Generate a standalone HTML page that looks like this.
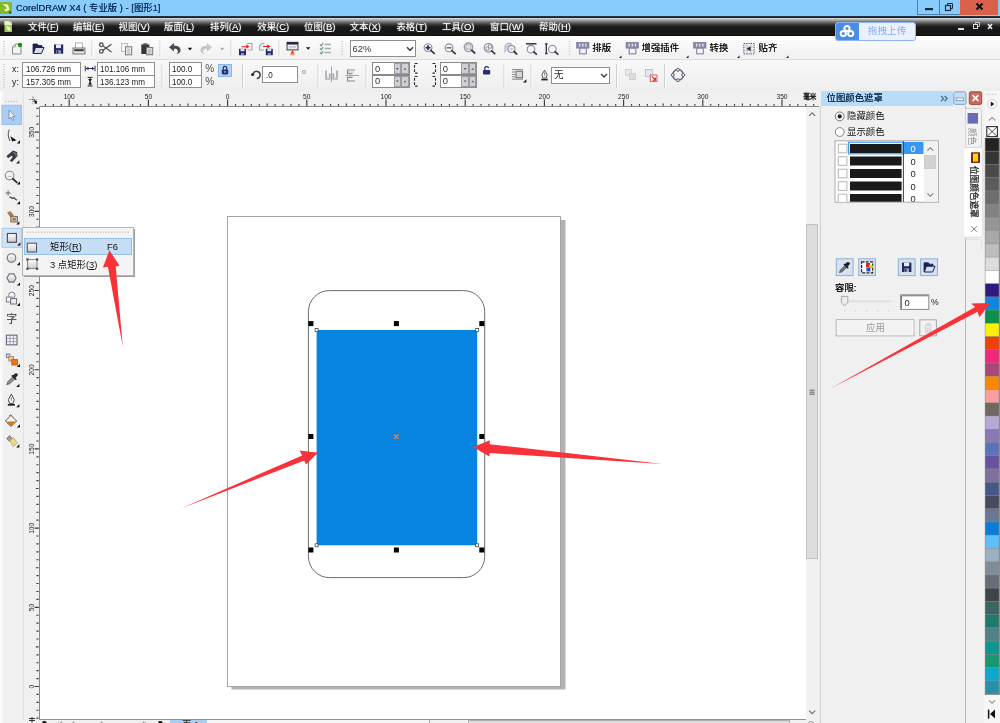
<!DOCTYPE html><html><head><meta charset="utf-8"><title>CorelDRAW X4</title><style>
*{box-sizing:border-box;margin:0;padding:0}
html,body{width:1000px;height:723px;overflow:hidden;background:#f0f0f0}
body{font-family:"Liberation Sans","Noto Sans CJK SC",sans-serif;font-size:9.4px;color:#000;position:relative}
.abs{position:absolute}
#root{position:absolute;left:0;top:0;width:1000px;height:723px;overflow:hidden;filter:blur(0.45px)}
.tx{white-space:nowrap;line-height:12px}
#title{left:0;top:0;width:1000px;height:16px;background:#88ccfe}
#menubar{left:0;top:16px;width:1000px;height:20.4px;background:linear-gradient(#2a3a4a 0,#1a222c 1.5px,#dcdcdc 2.2px,#a6a6a6 4px,#727272 6px,#424242 8px,#222 10px,#181818 12px,#181716 18.5px,#0a0a0a 20.4px)}
.mi{top:5px;font-size:9.4px;line-height:12px;color:#fff;white-space:nowrap;text-shadow:0 0 1.5px #aaa}
#tb1{left:0;top:36.4px;width:1000px;height:22.6px;background:linear-gradient(#fdfdfd,#f0f0f0)}
#tb2{left:0;top:59px;width:1000px;height:32px;background:linear-gradient(#f8f8f8,#eeeeee);border-top:1px solid #dedede}
.inp{background:#fff;border:1px solid #8e8e8e}
.num{font-size:9.2px;color:#222;transform-origin:0 50%;transform:scaleX(0.88);display:inline-block}
#canvas{left:39px;top:106px;width:767px;height:613px;background:#fff;border-left:1px solid #666;border-top:1px solid #888}
.sep{width:1px;background:#d0d0d0;border-right:1px solid #fafafa;box-sizing:content-box}
</style></head><body><div id="root">
<div id="title" class="abs">
<svg class="abs" style="left:0px;top:1px;" width="13" height="14" viewBox="0 0 13 14"><rect x="0" y="1" width="12" height="12" fill="#86b72a"/><path d="M2.5 3 L8 3.5 L9.5 8.5 L6 10.5 L4 8.5 L7 7.5 L5.5 5.5 Z" fill="#eef7cf"/><rect x="9" y="10.5" width="2" height="2" fill="#2a5a10"/></svg>
<div class="abs tx " style="left:16px;top:2px;font-size:9.4px;color:#0f3560;text-shadow:0 0 0.5px #0f3560">CorelDRAW X4 ( 专业版 ) - [图形1]</div>
<div class="abs" style="left:917px;top:0px;width:22px;height:15px;border-left:1px solid #4a7fae;border-bottom:1px solid #4a7fae"></div>
<div class="abs" style="left:939px;top:0px;width:21px;height:15px;border-left:1px solid #4a7fae;border-bottom:1px solid #4a7fae"></div>
<div class="abs" style="left:960px;top:0px;width:38px;height:15px;background:#d9604a"></div>
<svg class="abs" style="left:917px;top:0px;" width="83" height="16" viewBox="0 0 83 16"><rect x="8" y="8" width="8" height="2.2" fill="#16283a"/><rect x="28.5" y="5.5" width="5" height="5" fill="none" stroke="#16283a" stroke-width="1.2"/><path d="M30.5 5 V3.5 H35.5 V8.5 H34" fill="none" stroke="#16283a" stroke-width="1"/><path d="M59.5 3.5 L65.5 9.5 M65.5 3.5 L59.5 9.5" stroke="#111" stroke-width="2"/></svg>
</div>
<div id="menubar" class="abs">
<svg class="abs" style="left:3.7px;top:4px;" width="9" height="13" viewBox="0 0 9 13"><rect x="0.5" y="1" width="7.5" height="11" fill="#9ccb4c"/><path d="M0.5 1 h4 l3.5 3 v1 h-7.5z" fill="#e6f5c9"/><path d="M2 6 l4 1 l1 3 l-3 1 z" fill="#eaf6d0"/></svg>
<div class="abs mi" style="left:28px">文件(<u>F</u>)</div>
<div class="abs mi" style="left:73px">编辑(<u>E</u>)</div>
<div class="abs mi" style="left:118.5px">视图(<u>V</u>)</div>
<div class="abs mi" style="left:164px">版面(<u>L</u>)</div>
<div class="abs mi" style="left:210px">排列(<u>A</u>)</div>
<div class="abs mi" style="left:257.3px">效果(<u>C</u>)</div>
<div class="abs mi" style="left:304px">位图(<u>B</u>)</div>
<div class="abs mi" style="left:349.7px">文本(<u>X</u>)</div>
<div class="abs mi" style="left:396.4px">表格(<u>T</u>)</div>
<div class="abs mi" style="left:442px">工具(<u>O</u>)</div>
<div class="abs mi" style="left:490px">窗口(<u>W</u>)</div>
<div class="abs mi" style="left:539px">帮助(<u>H</u>)</div>
<svg class="abs" style="left:955px;top:4px;" width="40" height="14" viewBox="0 0 40 14"><rect x="3" y="8" width="6" height="2" fill="#ddd"/><rect x="18.5" y="4.5" width="4" height="4" fill="none" stroke="#ddd"/><path d="M20.5 4 V2.5 H24.5 V6.5 H23" fill="none" stroke="#ddd" stroke-width="0.8"/><path d="M33 4 L37 9 M37 4 L33 9" stroke="#eee" stroke-width="1.5"/></svg>
</div>
<div id="tb1" class="abs"></div>
<div id="tb2" class="abs"></div>
<div class="abs" style="left:835px;top:22px;width:81px;height:19px;border-radius:3px;background:#eaf1fd;border:1px solid #8db3f0;overflow:hidden"><div class="abs" style="left:-1px;top:-1px;width:24px;height:19px;background:#4a8de8"></div><svg class="abs" style="left:3px;top:1px" width="16" height="14" viewBox="0 0 16 14"><g fill="none" stroke="#fff" stroke-width="2"><circle cx="8" cy="4.5" r="2.6"/><circle cx="4.3" cy="9.5" r="2.6"/><circle cx="11.7" cy="9.5" r="2.6"/></g></svg><div class="abs tx" style="left:32px;top:2px;font-size:9.4px;color:#86acee;letter-spacing:0.3px">拖拽上传</div></div>
<svg class="abs" style="left:0;top:0" width="1000" height="95" viewBox="0 0 1000 95"><line x1="4" y1="41" x2="4" y2="56" stroke="#c4c4c4" stroke-width="1.5" stroke-dasharray="1 1.5"/><path d="M12.5 47 L15.5 44 H21 V54 H12.5Z" fill="#f4f4f4" stroke="#8a8a8a" stroke-width="1"/><path d="M12.5 47 H15.5 V44" fill="none" stroke="#9a9a9a" stroke-width="0.8"/><circle cx="20" cy="45" r="2.2" fill="#1f8a1f"/><path d="M33 53.5 V44 H37.5 L38.5 45.5 H42 V47" fill="#1c2250" stroke="#1c2250" stroke-width="0.8"/><path d="M33.3 53.5 L35.5 47.5 H44 L41.5 53.5Z" fill="#d9dcec" stroke="#1c2250" stroke-width="1"/><rect x="54" y="44.5" width="9.2" height="9.2" fill="#22285e"/><rect x="56" y="44.5" width="5" height="3.6" fill="#e8e8f4"/><rect x="56.3" y="50.3" width="4.6" height="3.4" fill="#9fa4c8"/><rect x="57" y="50.8" width="1.4" height="2.6" fill="#22285e"/><rect x="75.5" y="43" width="7" height="5.5" fill="#fff" stroke="#a0a0a0" stroke-width="0.8"/><rect x="73" y="48" width="12" height="6" fill="#e6e6e6" stroke="#6a6a6a" stroke-width="0.9"/><rect x="74.2" y="49.2" width="9.6" height="2" fill="#3c3c3c"/><line x1="92" y1="40" x2="92" y2="56" stroke="#cfcfcf" stroke-width="1"/><line x1="93" y1="40" x2="93" y2="56" stroke="#fbfbfb" stroke-width="1"/><g fill="none" stroke="#555" stroke-width="1.3"><circle cx="101.3" cy="44.8" r="1.8"/><circle cx="101.3" cy="51.4" r="1.8"/><path d="M102.8 45.8 L111.5 52 M102.8 50.4 L111.5 44.2"/></g><rect x="121.5" y="43.5" width="6" height="8" fill="#f7f7f7" stroke="#b8b8b8" stroke-width="0.9"/><rect x="125.5" y="46.8" width="6.2" height="8" fill="#f0f0f0" stroke="#777" stroke-width="1"/><path d="M127 49.2h3.2M127 51h3.2M127 52.8h3.2" stroke="#9a9a9a" stroke-width="0.7"/><rect x="141.3" y="44.5" width="8" height="9.5" fill="#3a3634"/><rect x="143.3" y="43.3" width="4" height="2" fill="#555"/><rect x="146.5" y="47.5" width="6.2" height="7.3" fill="#dcdcdc" stroke="#777" stroke-width="1"/><path d="M148 50h3.2M148 51.8h3.2M148 53.4h3.2" stroke="#999" stroke-width="0.7"/><line x1="160" y1="40" x2="160" y2="56" stroke="#cfcfcf" stroke-width="1"/><line x1="161" y1="40" x2="161" y2="56" stroke="#fbfbfb" stroke-width="1"/><path d="M169 47.2 L174 43 V45.8 C179 45.6 180.8 48 180.5 50.5 C180.3 52.6 178.6 54 176.3 54.2 C178 53 178.2 51.4 177.6 50.3 C176.9 49 175.5 48.7 174 48.8 V51.6 Z" fill="#454a54"/><path d="M187.8 47.8 h4.4 l-2.2 2.6z" fill="#111"/><path d="M212 47.2 L207 43 V45.8 C202 45.6 200.2 48 200.5 50.5 C200.7 52.6 202.4 54 204.7 54.2 C203 53 202.8 51.4 203.4 50.3 C204.1 49 205.5 48.7 207 48.8 V51.6 Z" fill="#c6c6c6"/><path d="M220 47.8 h4.4 l-2.2 2.6z" fill="#ababab"/><line x1="231" y1="40" x2="231" y2="56" stroke="#cfcfcf" stroke-width="1"/><line x1="232" y1="40" x2="232" y2="56" stroke="#fbfbfb" stroke-width="1"/><path d="M247 43.5 H252 V50 H247.5" fill="none" stroke="#9aa" stroke-width="1.1"/><rect x="239" y="48.8" width="7" height="6.4" fill="#23285c"/><rect x="240.5" y="49" width="4" height="2.2" fill="#dfe2f2"/><rect x="241" y="53" width="3" height="2.2" fill="#8c91b8"/><path d="M241.5 46.2 H246.3 V44.4 L249.6 46.6 L246.3 48.8 V47.2 H241.5Z" fill="#e41f25"/><path d="M264.5 43.5 H262 L259.5 46 V50 H264" fill="#eef2f4" stroke="#9aa" stroke-width="1.1"/><rect x="265.8" y="48.8" width="7" height="6.4" fill="#23285c"/><rect x="267.3" y="49" width="4" height="2.2" fill="#dfe2f2"/><rect x="267.8" y="53" width="3" height="2.2" fill="#8c91b8"/><path d="M263 46 H267.3 V44.2 L270.6 46.4 L267.3 48.6 V47 H263Z" fill="#e41f25"/><line x1="279" y1="40" x2="279" y2="56" stroke="#cfcfcf" stroke-width="1"/><line x1="280" y1="40" x2="280" y2="56" stroke="#fbfbfb" stroke-width="1"/><rect x="287" y="42.3" width="11" height="7.6" fill="#eceef6" stroke="#2a2a3a" stroke-width="0.9"/><rect x="287" y="42.3" width="11" height="2.2" fill="#22222e"/><path d="M289 47 h7" stroke="#9a9ab0" stroke-width="0.8"/><path d="M290.3 54.8 L292.5 49.2 L294.7 54.8 Z" fill="#f03a1a"/><circle cx="292.5" cy="54.3" r="1.4" fill="#f9a03a"/><path d="M306 47.2 h4.4 l-2.2 2.6z" fill="#111"/><g stroke="#a2b0a6" stroke-width="1.5"><path d="M324.5 44.5h6.5M324.5 48.5h6.5M324.5 52.5h6.5"/></g><g stroke="#7f9c86" stroke-width="1.3" fill="none"><path d="M320 44.5l1.2 1.2 2-2.6M320 48.5l1.2 1.2 2-2.6M320 52.5l1.2 1.2 2-2.6"/></g><line x1="342" y1="41" x2="342" y2="56" stroke="#c4c4c4" stroke-width="1.5" stroke-dasharray="1 1.5"/><circle cx="428" cy="47.6" r="3.9" fill="#f4f4fa" stroke="#8a8a98" stroke-width="1.1"/><line x1="430.808" y1="50.408" x2="434.2" y2="53.4" stroke="#3a3a44" stroke-width="1.8" stroke-linecap="round"/><path d="M425.6 47.6h4.8M428 45.2v4.8" stroke="#2a2a55" stroke-width="1.6"/><circle cx="449" cy="47.8" r="3.9" fill="#f4f4fa" stroke="#8a8a98" stroke-width="1.1"/><line x1="451.808" y1="50.608" x2="455.2" y2="53.6" stroke="#3a3a44" stroke-width="1.8" stroke-linecap="round"/><path d="M446.6 47.8h4.8" stroke="#777" stroke-width="1.6"/><circle cx="468.5" cy="47.2" r="4.3" fill="#f4f4fa" stroke="#8a8a98" stroke-width="1.1"/><line x1="471.596" y1="50.296" x2="474.7" y2="53" stroke="#3a3a44" stroke-width="1.8" stroke-linecap="round"/><rect x="466" y="44.8" width="5" height="4.4" fill="#e4e4ee" stroke="#9a9aa8" stroke-width="0.8"/><circle cx="488.5" cy="47.8" r="4.3" fill="#f4f4fa" stroke="#8a8a98" stroke-width="1.1"/><line x1="491.596" y1="50.896" x2="494.7" y2="53.6" stroke="#3a3a44" stroke-width="1.8" stroke-linecap="round"/><rect x="486" y="47" width="3" height="3" fill="#fff" stroke="#888" stroke-width="0.8"/><rect x="488.5" y="45" width="3" height="3" fill="#fff" stroke="#888" stroke-width="0.8"/><path d="M505 52.5 V45.5 L507.5 43.3 H511 V46" fill="#d6d6e6" stroke="#a0a0b4" stroke-width="0.9"/><circle cx="511.5" cy="49" r="3.5" fill="#f4f4fa" stroke="#8a8a98" stroke-width="1.1"/><line x1="514.02" y1="51.52" x2="516.6" y2="54" stroke="#3a3a44" stroke-width="1.8" stroke-linecap="round"/><circle cx="511.5" cy="49" r="1.5" fill="#c8c8dc"/><path d="M526 43.8 h10.5" stroke="#33333e" stroke-width="1.5"/><circle cx="531" cy="49.2" r="3.8" fill="#f4f4fa" stroke="#8a8a98" stroke-width="1.1"/><line x1="533.736" y1="51.936" x2="536.3" y2="54.2" stroke="#3a3a44" stroke-width="1.8" stroke-linecap="round"/><path d="M546.3 44 v9.5M545 44h2.6M545 53.5h2.6" stroke="#33333e" stroke-width="1.3"/><circle cx="552.3" cy="49" r="3.8" fill="#f4f4fa" stroke="#8a8a98" stroke-width="1.1"/><line x1="555.036" y1="51.736" x2="557.8" y2="54.2" stroke="#3a3a44" stroke-width="1.8" stroke-linecap="round"/><line x1="569.5" y1="41" x2="569.5" y2="56" stroke="#c4c4c4" stroke-width="1.5" stroke-dasharray="1 1.5"/><rect x="576.5" y="42.3" width="12.5" height="5.8" fill="#8a8aa8" stroke="#77779a" stroke-width="0.6"/><path d="M579.7 43.8 v2.8M582.8 43.8 v2.8M585.9 43.8 v2.8" stroke="#f0f0f8" stroke-width="1.2"/><rect x="579.7" y="48.2" width="6.6" height="5.6" fill="#f4f4fa" stroke="#8a8aa8" stroke-width="1.2"/><path d="M621.5 58 v-2.4 l-2.4 2.4z" fill="#111"/><rect x="626" y="42.3" width="12.5" height="5.8" fill="#8a8aa8" stroke="#77779a" stroke-width="0.6"/><path d="M629.2 43.8 v2.8M632.3 43.8 v2.8M635.4 43.8 v2.8" stroke="#f0f0f8" stroke-width="1.2"/><rect x="629.2" y="48.2" width="6.6" height="5.6" fill="#f4f4fa" stroke="#8a8aa8" stroke-width="1.2"/><path d="M688.5 58 v-2.4 l-2.4 2.4z" fill="#111"/><rect x="693.5" y="42.3" width="12.5" height="5.8" fill="#8a8aa8" stroke="#77779a" stroke-width="0.6"/><path d="M696.7 43.8 v2.8M699.8 43.8 v2.8M702.9 43.8 v2.8" stroke="#f0f0f8" stroke-width="1.2"/><rect x="696.7" y="48.2" width="6.6" height="5.6" fill="#f4f4fa" stroke="#8a8aa8" stroke-width="1.2"/><path d="M739.5 58 v-2.4 l-2.4 2.4z" fill="#111"/><rect x="743.8" y="43.5" width="10.4" height="10.4" fill="#f2f2f6" stroke="#55555f" stroke-width="1" stroke-dasharray="1.3 1"/><path d="M747.2 43.5v10.4M750.8 43.5v10.4M743.8 47h10.4M743.8 50.5h10.4" stroke="#a8a8b4" stroke-width="0.6"/><path d="M746.3 48.7 L750.6 46.4 V51Z" fill="#2a2a34"/><path d="M788.5 58 v-2.4 l-2.4 2.4z" fill="#111"/></svg>
<div class="abs tx " style="left:592.3px;top:42px;font-size:9.4px;color:#111;text-shadow:0 0 0.5px #222">排版</div>
<div class="abs tx " style="left:641.5px;top:42px;font-size:9.4px;color:#111;text-shadow:0 0 0.5px #222">增强插件</div>
<div class="abs tx " style="left:709.5px;top:42px;font-size:9.4px;color:#111;text-shadow:0 0 0.5px #222">转换</div>
<div class="abs tx " style="left:758.5px;top:42px;font-size:9.4px;color:#111;text-shadow:0 0 0.5px #222">贴齐</div>
<div class="abs" style="left:349.5px;top:40.3px;width:66.8px;height:16.3px;background:#fff;border:1px solid #8e8e8e"></div>
<div class="abs tx " style="left:352.5px;top:42.5px;font-size:9.4px;color:#333">62%</div>
<svg class="abs" style="left:405px;top:44px;" width="10" height="10" viewBox="0 0 10 10"><path d="M2 3.2 L5 6.3 L8 3.2" fill="none" stroke="#444" stroke-width="1.5"/></svg>
<div class="abs tx " style="left:12px;top:63.3px;font-size:8.8px;color:#222">x:</div>
<div class="abs tx " style="left:12px;top:75.6px;font-size:8.8px;color:#222">y:</div>
<div class="abs inp" style="left:22px;top:62px;width:58.5px;height:13.6px"><span class="abs tx num" style="left:2.6px;top:-0.2px">106.726 mm</span></div>
<div class="abs inp" style="left:22px;top:74.6px;width:58.5px;height:13.4px"><span class="abs tx num" style="left:2.6px;top:0.6px">157.305 mm</span></div>
<div class="abs inp" style="left:96.5px;top:62px;width:58.5px;height:13.6px"><span class="abs tx num" style="left:2.6px;top:-0.2px">101.106 mm</span></div>
<div class="abs inp" style="left:96.5px;top:74.6px;width:58.5px;height:13.4px"><span class="abs tx num" style="left:2.6px;top:0.6px">136.123 mm</span></div>
<div class="abs inp" style="left:168.5px;top:62px;width:33.5px;height:13.6px"><span class="abs tx num" style="left:2.6px;top:-0.2px">100.0</span></div>
<div class="abs inp" style="left:168.5px;top:74.6px;width:33.5px;height:13.4px"><span class="abs tx num" style="left:2.6px;top:0.6px">100.0</span></div>
<div class="abs tx " style="left:205.3px;top:63.2px;font-size:10px;color:#4a4a4a">%</div>
<div class="abs tx " style="left:205.3px;top:76.2px;font-size:10px;color:#4a4a4a">%</div>
<div class="abs" style="left:218.3px;top:64.3px;width:13.6px;height:13px;background:#b4d0f2;border:1px solid #86b8ec"></div>
<div class="abs inp" style="left:262px;top:66.3px;width:36.3px;height:17px"><span class="abs tx num" style="left:2.6px;top:1.5px">.0</span></div>
<div class="abs" style="left:372px;top:62.3px;width:37.5px;height:13.2px;background:#fff;border:1px solid #8a8a8a"></div>
<div class="abs" style="left:393.6px;top:63.3px;width:7.4px;height:11.2px;background:#d0d0d4;border:1px solid #9c9ca0"></div>
<div class="abs" style="left:401.3px;top:63.3px;width:7.4px;height:11.2px;background:#d0d0d4;border:1px solid #9c9ca0"></div>
<div class="abs tx " style="left:375px;top:62.6px;font-size:9.4px;color:#333">0</div>
<div class="abs" style="left:372px;top:74.8px;width:37.5px;height:13px;background:#fff;border:1px solid #8a8a8a"></div>
<div class="abs" style="left:393.6px;top:75.8px;width:7.4px;height:11px;background:#d0d0d4;border:1px solid #9c9ca0"></div>
<div class="abs" style="left:401.3px;top:75.8px;width:7.4px;height:11px;background:#d0d0d4;border:1px solid #9c9ca0"></div>
<div class="abs tx " style="left:375px;top:75.1px;font-size:9.4px;color:#333">0</div>
<div class="abs" style="left:439.8px;top:62.3px;width:37.5px;height:13.2px;background:#fff;border:1px solid #8a8a8a"></div>
<div class="abs" style="left:461.4px;top:63.3px;width:7.4px;height:11.2px;background:#d0d0d4;border:1px solid #9c9ca0"></div>
<div class="abs" style="left:469.1px;top:63.3px;width:7.4px;height:11.2px;background:#d0d0d4;border:1px solid #9c9ca0"></div>
<div class="abs tx " style="left:442.8px;top:62.6px;font-size:9.4px;color:#333">0</div>
<div class="abs" style="left:439.8px;top:74.8px;width:37.5px;height:13px;background:#fff;border:1px solid #8a8a8a"></div>
<div class="abs" style="left:461.4px;top:75.8px;width:7.4px;height:11px;background:#d0d0d4;border:1px solid #9c9ca0"></div>
<div class="abs" style="left:469.1px;top:75.8px;width:7.4px;height:11px;background:#d0d0d4;border:1px solid #9c9ca0"></div>
<div class="abs tx " style="left:442.8px;top:75.1px;font-size:9.4px;color:#333">0</div>
<div class="abs" style="left:551.3px;top:66.8px;width:59px;height:17px;background:#fff;border:1px solid #8e8e8e"></div>
<div class="abs tx " style="left:554px;top:69.4px;font-size:9.6px;color:#222">无</div>
<svg class="abs" style="left:0;top:0" width="1000" height="95" viewBox="0 0 1000 95"><line x1="4" y1="64" x2="4" y2="88" stroke="#c4c4c4" stroke-width="1.5" stroke-dasharray="1 1.5"/><path d="M85.3 65.8v5.4M95 65.8v5.4M86 68.5h8.4" stroke="#2a2e52" stroke-width="1"/><path d="M86 68.5l2.4-1.8v3.6zM94.4 68.5l-2.4-1.8v3.6z" fill="#2a2e52"/><path d="M87.6 77.4h5M87.6 86h5M90.1 78v7.6" stroke="#222" stroke-width="1"/><path d="M90.1 82l-2-3h4zM90.1 81.6l-2 3h4z" fill="#222"/><line x1="162" y1="64" x2="162" y2="88" stroke="#cfcfcf" stroke-width="1"/><line x1="163" y1="64" x2="163" y2="88" stroke="#fbfbfb" stroke-width="1"/><rect x="221.8" y="69.6" width="6.4" height="4.8" rx="0.8" fill="#27306a"/><path d="M223.2 69.8v-1.6a1.8 1.8 0 0 1 3.6 0v1.6" fill="none" stroke="#27306a" stroke-width="1.2"/><rect x="224.3" y="71" width="1.4" height="1.8" fill="#9fb4e0"/><line x1="242.5" y1="64" x2="242.5" y2="88" stroke="#cfcfcf" stroke-width="1"/><line x1="243.5" y1="64" x2="243.5" y2="88" stroke="#fbfbfb" stroke-width="1"/><path d="M253.2 73.6 A3.6 3.6 0 1 1 256.8 78.6" fill="none" stroke="#444" stroke-width="1.5"/><circle cx="252.6" cy="74.4" r="1.5" fill="#222"/><circle cx="304" cy="72" r="1.6" fill="none" stroke="#9a9a9a" stroke-width="0.9"/><line x1="318" y1="64" x2="318" y2="88" stroke="#cfcfcf" stroke-width="1"/><line x1="319" y1="64" x2="319" y2="88" stroke="#fbfbfb" stroke-width="1"/><path d="M331.5 66.5v15.5" stroke="#9a9aa6" stroke-width="0.9"/><path d="M326 70.5v8.5h3.8v-5.5" fill="none" stroke="#888894" stroke-width="1.2"/><path d="M337 70.5v8.5h-3.8v-5.5" fill="none" stroke="#888894" stroke-width="1.2"/><rect x="326.6" y="76.4" width="3" height="2.4" fill="#d8d8e2"/><rect x="333.6" y="76.4" width="3" height="2.4" fill="#d8d8e2"/><path d="M345.5 75.5h13.5" stroke="#9a9aa6" stroke-width="0.9"/><path d="M355 70h-7.5v3.6h5" fill="none" stroke="#888894" stroke-width="1.2"/><path d="M355 81h-7.5v-3.6h5" fill="none" stroke="#888894" stroke-width="1.2"/><rect x="348" y="70.5" width="6" height="2.6" fill="#dcdce6"/><line x1="366" y1="64" x2="366" y2="88" stroke="#cfcfcf" stroke-width="1"/><line x1="367" y1="64" x2="367" y2="88" stroke="#fbfbfb" stroke-width="1"/><path d="M395.8 68.1 h3 l-1.5 1.8z" fill="#5a5a7a"/><path d="M403.5 69.8 h3 l-1.5 -1.8z" fill="#5a5a7a"/><path d="M395.8 80.5 h3 l-1.5 1.8z" fill="#5a5a7a"/><path d="M403.5 82.2 h3 l-1.5 -1.8z" fill="#5a5a7a"/><path d="M463.6 68.1 h3 l-1.5 1.8z" fill="#5a5a7a"/><path d="M471.3 69.8 h3 l-1.5 -1.8z" fill="#5a5a7a"/><path d="M463.6 80.5 h3 l-1.5 1.8z" fill="#5a5a7a"/><path d="M471.3 82.2 h3 l-1.5 -1.8z" fill="#5a5a7a"/><path d="M417.5 63.5 h-3 v9.6 h3" fill="none" stroke="#222" stroke-width="1.1" stroke-dasharray="2.8 1.6"/><path d="M432.5 63.5 h3 v9.6 h-3" fill="none" stroke="#222" stroke-width="1.1" stroke-dasharray="2.8 1.6"/><path d="M417.5 76.5 h-3 v9.6 h3" fill="none" stroke="#222" stroke-width="1.1" stroke-dasharray="2.8 1.6"/><path d="M432.5 76.5 h3 v9.6 h-3" fill="none" stroke="#222" stroke-width="1.1" stroke-dasharray="2.8 1.6"/><rect x="483" y="70" width="7.2" height="4.4" rx="0.6" fill="#2c2c78"/><path d="M484.8 70v-1.2a1.9 1.9 0 0 1 3.8 -0.6" fill="none" stroke="#2c2c78" stroke-width="1.2"/><line x1="504" y1="64" x2="504" y2="88" stroke="#cfcfcf" stroke-width="1"/><line x1="505" y1="64" x2="505" y2="88" stroke="#fbfbfb" stroke-width="1"/><path d="M512 69.6h11M512 72h3M512 74.4h3M512 76.8h3M512 79.2h11" stroke="#777" stroke-width="0.9"/><rect x="516" y="71.2" width="6.6" height="6.6" fill="#d6d6dc" stroke="#666" stroke-width="1"/><path d="M526.4 82.6 v-3.4 l-3.4 3.4z" fill="#111"/><line x1="531" y1="64" x2="531" y2="88" stroke="#cfcfcf" stroke-width="1"/><line x1="532" y1="64" x2="532" y2="88" stroke="#fbfbfb" stroke-width="1"/><path d="M544.5 70.2 L547 74.6 L546.2 78 H542.8 L542 74.6Z" fill="#f6f6f6" stroke="#444" stroke-width="0.9"/><path d="M544.5 72.5v3" stroke="#555" stroke-width="0.7"/><rect x="541.3" y="78.8" width="6.4" height="1.6" fill="#222"/><path d="M601.2 74 L604.1 77 L607 74" fill="none" stroke="#444" stroke-width="1.5"/><line x1="616.5" y1="64" x2="616.5" y2="88" stroke="#cfcfcf" stroke-width="1"/><line x1="617.5" y1="64" x2="617.5" y2="88" stroke="#fbfbfb" stroke-width="1"/><rect x="625.5" y="69.5" width="6" height="6" fill="#e6e6e6" stroke="#d2d2d2" stroke-width="0.9"/><rect x="629.5" y="73.5" width="6" height="6" fill="#dcdcdc" stroke="#cfcfcf" stroke-width="0.9"/><rect x="645.5" y="69.5" width="6.8" height="7" fill="#e2e8f8" stroke="#b4bcdc" stroke-width="0.9"/><rect x="650.3" y="75" width="6.6" height="6.4" fill="#fff" stroke="#dc5a5a" stroke-width="1"/><path d="M651.8 76.4 L655 79.6 M655.4 77.4 v2.8 h-2.8" stroke="#d8202a" stroke-width="1.1" fill="none"/><line x1="664.5" y1="64" x2="664.5" y2="88" stroke="#cfcfcf" stroke-width="1"/><line x1="665.5" y1="64" x2="665.5" y2="88" stroke="#fbfbfb" stroke-width="1"/><circle cx="678" cy="75" r="5.4" fill="none" stroke="#66667a" stroke-width="1.5"/><g fill="#e8e8f0" stroke="#55556a" stroke-width="0.9"><circle cx="678" cy="69.8" r="1.5"/><circle cx="678" cy="80.2" r="1.5"/><circle cx="672.8" cy="75" r="1.5"/><circle cx="683.2" cy="75" r="1.5"/></g></svg>
<div class="abs" style="left:0px;top:91px;width:1000px;height:632px;background:#f0f0f0"></div>
<div class="abs" style="left:0px;top:91px;width:23.5px;height:632px;background:linear-gradient(90deg,#fdfdfd 0,#f0f0f0 4px,#f0f0f0 100%);border-right:1px solid #e0e0e0"></div>
<div class="abs" style="left:39px;top:106px;width:767px;height:613px;background:#fff"></div>
<svg class="abs" style="left:0;top:0" width="1000" height="723" viewBox="0 0 1000 723"><path d="M39.5 719 V106.5 H819" fill="none" stroke="#868686" stroke-width="1"/><path d="M45.44 103.9V105.7M53.36 103.9V105.7M61.28 103.9V105.7M69.20 99.5V105.9M77.12 103.9V105.7M85.04 103.9V105.7M92.96 103.9V105.7M100.88 103.9V105.7M108.80 103.4V105.7M116.72 103.9V105.7M124.64 103.9V105.7M132.56 103.9V105.7M140.48 103.9V105.7M148.40 99.5V105.9M156.32 103.9V105.7M164.24 103.9V105.7M172.16 103.9V105.7M180.08 103.9V105.7M188.00 103.4V105.7M195.92 103.9V105.7M203.84 103.9V105.7M211.76 103.9V105.7M219.68 103.9V105.7M227.60 99.5V105.9M235.52 103.9V105.7M243.44 103.9V105.7M251.36 103.9V105.7M259.28 103.9V105.7M267.20 103.4V105.7M275.12 103.9V105.7M283.04 103.9V105.7M290.96 103.9V105.7M298.88 103.9V105.7M306.80 99.5V105.9M314.72 103.9V105.7M322.64 103.9V105.7M330.56 103.9V105.7M338.48 103.9V105.7M346.40 103.4V105.7M354.32 103.9V105.7M362.24 103.9V105.7M370.16 103.9V105.7M378.08 103.9V105.7M386.00 99.5V105.9M393.92 103.9V105.7M401.84 103.9V105.7M409.76 103.9V105.7M417.68 103.9V105.7M425.60 103.4V105.7M433.52 103.9V105.7M441.44 103.9V105.7M449.36 103.9V105.7M457.28 103.9V105.7M465.20 99.5V105.9M473.12 103.9V105.7M481.04 103.9V105.7M488.96 103.9V105.7M496.88 103.9V105.7M504.80 103.4V105.7M512.72 103.9V105.7M520.64 103.9V105.7M528.56 103.9V105.7M536.48 103.9V105.7M544.40 99.5V105.9M552.32 103.9V105.7M560.24 103.9V105.7M568.16 103.9V105.7M576.08 103.9V105.7M584.00 103.4V105.7M591.92 103.9V105.7M599.84 103.9V105.7M607.76 103.9V105.7M615.68 103.9V105.7M623.60 99.5V105.9M631.52 103.9V105.7M639.44 103.9V105.7M647.36 103.9V105.7M655.28 103.9V105.7M663.20 103.4V105.7M671.12 103.9V105.7M679.04 103.9V105.7M686.96 103.9V105.7M694.88 103.9V105.7M702.80 99.5V105.9M710.72 103.9V105.7M718.64 103.9V105.7M726.56 103.9V105.7M734.48 103.9V105.7M742.40 103.4V105.7M750.32 103.9V105.7M758.24 103.9V105.7M766.16 103.9V105.7M774.08 103.9V105.7M782.00 99.5V105.9M789.92 103.9V105.7M797.84 103.9V105.7M805.76 103.9V105.7M813.68 103.9V105.7" stroke="#3a3a3a" stroke-width="1.15"/><path d="M36.4 718.18H38.6M36.4 710.26H38.6M36.4 702.34H38.6M36.4 694.42H38.6M34.6 686.50H38.9M36.4 678.58H38.6M36.4 670.66H38.6M36.4 662.74H38.6M36.4 654.82H38.6M35.9 646.90H38.6M36.4 638.98H38.6M36.4 631.06H38.6M36.4 623.14H38.6M36.4 615.22H38.6M34.6 607.30H38.9M36.4 599.38H38.6M36.4 591.46H38.6M36.4 583.54H38.6M36.4 575.62H38.6M35.9 567.70H38.6M36.4 559.78H38.6M36.4 551.86H38.6M36.4 543.94H38.6M36.4 536.02H38.6M34.6 528.10H38.9M36.4 520.18H38.6M36.4 512.26H38.6M36.4 504.34H38.6M36.4 496.42H38.6M35.9 488.50H38.6M36.4 480.58H38.6M36.4 472.66H38.6M36.4 464.74H38.6M36.4 456.82H38.6M34.6 448.90H38.9M36.4 440.98H38.6M36.4 433.06H38.6M36.4 425.14H38.6M36.4 417.22H38.6M35.9 409.30H38.6M36.4 401.38H38.6M36.4 393.46H38.6M36.4 385.54H38.6M36.4 377.62H38.6M34.6 369.70H38.9M36.4 361.78H38.6M36.4 353.86H38.6M36.4 345.94H38.6M36.4 338.02H38.6M35.9 330.10H38.6M36.4 322.18H38.6M36.4 314.26H38.6M36.4 306.34H38.6M36.4 298.42H38.6M34.6 290.50H38.9M36.4 282.58H38.6M36.4 274.66H38.6M36.4 266.74H38.6M36.4 258.82H38.6M35.9 250.90H38.6M36.4 242.98H38.6M36.4 235.06H38.6M36.4 227.14H38.6M36.4 219.22H38.6M34.6 211.30H38.9M36.4 203.38H38.6M36.4 195.46H38.6M36.4 187.54H38.6M36.4 179.62H38.6M35.9 171.70H38.6M36.4 163.78H38.6M36.4 155.86H38.6M36.4 147.94H38.6M36.4 140.02H38.6M34.6 132.10H38.9M36.4 124.18H38.6M36.4 116.26H38.6M36.4 108.34H38.6" stroke="#3a3a3a" stroke-width="1.15"/><text x="69.2" y="98.7" font-size="7.4" text-anchor="middle" textLength="11.1" lengthAdjust="spacingAndGlyphs" fill="#1a1a1a" font-family="Liberation Sans, sans-serif">100</text><text x="148.4" y="98.7" font-size="7.4" text-anchor="middle" textLength="7.4" lengthAdjust="spacingAndGlyphs" fill="#1a1a1a" font-family="Liberation Sans, sans-serif">50</text><text x="227.6" y="98.7" font-size="7.4" text-anchor="middle" textLength="3.7" lengthAdjust="spacingAndGlyphs" fill="#1a1a1a" font-family="Liberation Sans, sans-serif">0</text><text x="306.8" y="98.7" font-size="7.4" text-anchor="middle" textLength="7.4" lengthAdjust="spacingAndGlyphs" fill="#1a1a1a" font-family="Liberation Sans, sans-serif">50</text><text x="386.0" y="98.7" font-size="7.4" text-anchor="middle" textLength="11.1" lengthAdjust="spacingAndGlyphs" fill="#1a1a1a" font-family="Liberation Sans, sans-serif">100</text><text x="465.2" y="98.7" font-size="7.4" text-anchor="middle" textLength="11.1" lengthAdjust="spacingAndGlyphs" fill="#1a1a1a" font-family="Liberation Sans, sans-serif">150</text><text x="544.4" y="98.7" font-size="7.4" text-anchor="middle" textLength="11.1" lengthAdjust="spacingAndGlyphs" fill="#1a1a1a" font-family="Liberation Sans, sans-serif">200</text><text x="623.6" y="98.7" font-size="7.4" text-anchor="middle" textLength="11.1" lengthAdjust="spacingAndGlyphs" fill="#1a1a1a" font-family="Liberation Sans, sans-serif">250</text><text x="702.8" y="98.7" font-size="7.4" text-anchor="middle" textLength="11.1" lengthAdjust="spacingAndGlyphs" fill="#1a1a1a" font-family="Liberation Sans, sans-serif">300</text><text x="782.0" y="98.7" font-size="7.4" text-anchor="middle" textLength="11.1" lengthAdjust="spacingAndGlyphs" fill="#1a1a1a" font-family="Liberation Sans, sans-serif">350</text><text transform="translate(34 686.7) rotate(-90)" font-size="7.4" text-anchor="middle" textLength="3.7" lengthAdjust="spacingAndGlyphs" fill="#1a1a1a" font-family="Liberation Sans, sans-serif">0</text><text transform="translate(34 607.5) rotate(-90)" font-size="7.4" text-anchor="middle" textLength="7.4" lengthAdjust="spacingAndGlyphs" fill="#1a1a1a" font-family="Liberation Sans, sans-serif">50</text><text transform="translate(34 528.3) rotate(-90)" font-size="7.4" text-anchor="middle" textLength="11.1" lengthAdjust="spacingAndGlyphs" fill="#1a1a1a" font-family="Liberation Sans, sans-serif">100</text><text transform="translate(34 449.1) rotate(-90)" font-size="7.4" text-anchor="middle" textLength="11.1" lengthAdjust="spacingAndGlyphs" fill="#1a1a1a" font-family="Liberation Sans, sans-serif">150</text><text transform="translate(34 369.9) rotate(-90)" font-size="7.4" text-anchor="middle" textLength="11.1" lengthAdjust="spacingAndGlyphs" fill="#1a1a1a" font-family="Liberation Sans, sans-serif">200</text><text transform="translate(34 290.7) rotate(-90)" font-size="7.4" text-anchor="middle" textLength="11.1" lengthAdjust="spacingAndGlyphs" fill="#1a1a1a" font-family="Liberation Sans, sans-serif">250</text><text transform="translate(34 211.5) rotate(-90)" font-size="7.4" text-anchor="middle" textLength="11.1" lengthAdjust="spacingAndGlyphs" fill="#1a1a1a" font-family="Liberation Sans, sans-serif">300</text><text transform="translate(34 132.3) rotate(-90)" font-size="7.4" text-anchor="middle" textLength="11.1" lengthAdjust="spacingAndGlyphs" fill="#1a1a1a" font-family="Liberation Sans, sans-serif">350</text><text x="803.2" y="99.4" font-size="6.6" fill="#111" stroke="#111" stroke-width="0.3" font-family="Liberation Sans, Noto Sans CJK SC, sans-serif">毫米</text><path d="M29.5 99.5h7M33 96.5v7" stroke="#444" stroke-width="0.9" stroke-dasharray="1.2 1"/><path d="M33.2 100 L36.6 103.4 V100.8 Z M36.8 103.6 h-2.8z" fill="#111"/><rect x="34.6" y="101.4" width="2.2" height="2.2" fill="#111"/><rect x="231.5" y="220" width="334" height="469.5" fill="#b2b2b2"/><rect x="227.5" y="216.5" width="333" height="470" fill="#fff" stroke="#a4a4a4" stroke-width="1"/><rect x="308.4" y="290.6" width="176.3" height="287" rx="21" ry="21" fill="#fff" stroke="#6c6c6c" stroke-width="1"/><rect x="316.6" y="330" width="160.6" height="215.3" fill="#0784e0"/><rect x="308.4" y="321.1" width="5" height="5" fill="#000"/><rect x="308.4" y="434.0" width="5" height="5" fill="#000"/><rect x="308.4" y="547.5" width="5" height="5" fill="#000"/><rect x="393.9" y="321.1" width="5" height="5" fill="#000"/><rect x="393.9" y="547.5" width="5" height="5" fill="#000"/><rect x="479.3" y="321.1" width="5" height="5" fill="#000"/><rect x="479.3" y="434.0" width="5" height="5" fill="#000"/><rect x="479.3" y="547.5" width="5" height="5" fill="#000"/><path d="M394.1 434.2l4.6 4.6M398.7 434.2l-4.6 4.6" stroke="#e07a52" stroke-width="1.5"/><rect x="315.1" y="328.5" width="3" height="3" fill="#fff" stroke="#333" stroke-width="0.7"/><rect x="475.7" y="328.5" width="3" height="3" fill="#fff" stroke="#333" stroke-width="0.7"/><rect x="315.1" y="543.8" width="3" height="3" fill="#fff" stroke="#333" stroke-width="0.7"/><rect x="475.7" y="543.8" width="3" height="3" fill="#fff" stroke="#333" stroke-width="0.7"/></svg>
<div class="abs" style="left:806px;top:107px;width:14.4px;height:612px;background:#f1f1f1"></div>
<div class="abs" style="left:806.2px;top:224px;width:11.8px;height:334.6px;background:#dcdcdc;border:1px solid #c2c2c2"></div>
<svg class="abs" style="left:806px;top:107px;" width="14" height="612" viewBox="0 0 14 612"><path d="M3.2 8.8 L6.2 5.8 L9.2 8.8" fill="none" stroke="#707070" stroke-width="1.2"/><path d="M3.2 603.6 L6.2 606.6 L9.2 603.6" fill="none" stroke="#707070" stroke-width="1.2"/><path d="M3.6 283.2h5M3.6 285.2h5M3.6 287.2h5" stroke="#555" stroke-width="0.9"/></svg>
<div class="abs" style="left:23px;top:719.5px;width:797px;height:4px;background:#f0f0f0"></div>
<div class="abs" style="left:39px;top:719px;width:767px;height:1px;background:#909090"></div>
<div class="abs" style="left:170px;top:720px;width:37px;height:4px;background:#a9cdf0"></div>
<div class="abs" style="left:207px;top:720px;width:223px;height:4px;background:#f6f6f6;border-right:1px solid #a8a8a8"></div>
<div class="abs" style="left:467.5px;top:720.3px;width:322.5px;height:4px;background:#dcdcdc;border:1px solid #b0b0b0"></div>
<svg class="abs" style="left:24px;top:714px;" width="800" height="9" viewBox="0 0 800 9"><path d="M18.5 7 h3 l1.2 1.2 v1 h-4.2z M134.5 7 h3 l1.2 1.2 v1 h-4.2z" fill="#222"/><path d="M34.5 7.8v1.4M36 8.6l1.6-1v2z M48.5 8.6l1.6-1v2z M77 7.6l1.6 1-1.6 1z M119 7.6l1.6 1-1.6 1zM121.5 7.8v1.4" fill="#9a9a9a" stroke="#9a9a9a" stroke-width="0.6"/><circle cx="787" cy="10.6" r="3.2" fill="#e4e4e4" stroke="#9a9a9a" stroke-width="0.8"/></svg>
<div class="abs tx" style="left:182px;top:718.6px;font-size:9.4px;color:#222;height:5px;overflow:hidden">页 1</div>
<svg class="abs" style="left:27px;top:715px;" width="10" height="8" viewBox="0 0 10 8"><path d="M2 3.5h6M2 5.5h6M5 2v5.5" stroke="#222" stroke-width="0.9"/></svg>
<svg class="abs" style="left:0;top:0" width="24" height="460" viewBox="0 0 24 460"><line x1="5" y1="101.5" x2="19" y2="101.5" stroke="#c2c2c2" stroke-width="1.5" stroke-dasharray="1.2 1.6"/><rect x="2" y="105.3" width="19.4" height="19.2" fill="#a9cdf3" stroke="#93c0f0" stroke-width="1"/><path d="M9 110 V119 L11 117.2 L12.6 120.6 L14 120 L12.5 116.6 L15 116.4Z" fill="#f4f6fa" stroke="#7f8a9c" stroke-width="0.9"/><path d="M9.3 129.5 C7.6 133 8 137 10 141" fill="none" stroke="#555" stroke-width="1"/><path d="M10.3 136.2 L16.6 140.2 L12.2 141.6Z" fill="#111"/><path d="M20 143.5 v-3.2 l-3.2 3.2z" fill="#111"/><path d="M6.5 156 L13 150.5 L17 152 L17.5 156 L12 162 L9.8 160.8 L12.8 156.8 L11.8 155.8 L8 158.2Z" fill="#3c3c44"/><path d="M13.2 152.5l2.6 1 .3 2.2" stroke="#9a9aa8" stroke-width="0.8" fill="none"/><path d="M19.4 163.5 v-3.2 l-3.2 3.2z" fill="#111"/><circle cx="9.6" cy="175.6" r="4.3" fill="#f2f2f6" stroke="#8a8a94" stroke-width="1.1"/><path d="M7.6 176.4h4" stroke="#b0b0ba" stroke-width="0.9"/><path d="M12.8 178.8 L16.8 182.4" stroke="#333" stroke-width="1.9" stroke-linecap="round"/><path d="M20 184.5 v-3.2 l-3.2 3.2z" fill="#111"/><path d="M5.6 193h5M8.1 190.5v5" stroke="#666" stroke-width="1"/><path d="M9.5 197.5 C11 195.8 12 199.5 13.3 198 C14.6 196.6 15.2 200.8 17 199.6" fill="none" stroke="#444" stroke-width="1.2"/><path d="M20 204.3 v-3.2 l-3.2 3.2z" fill="#111"/><path d="M7 212.5 L10.5 211 L14 215.5 L10.5 217.5Z" fill="#b07a4a"/><rect x="10.8" y="216.4" width="6.6" height="5.6" fill="#d8c0a8" stroke="#666" stroke-width="0.9"/><rect x="12.6" y="218" width="3" height="2.6" fill="#c06820"/><path d="M19.4 224.5 v-3.2 l-3.2 3.2z" fill="#111"/><rect x="2" y="228.3" width="19.4" height="19" fill="#cfe2f6" stroke="#a9c9ec" stroke-width="1"/><defs><linearGradient id="rg" x1="0" y1="0" x2="0" y2="1"><stop offset="0" stop-color="#ffffff"/><stop offset="1" stop-color="#c9c9cf"/></linearGradient></defs><rect x="7.4" y="233.5" width="9" height="8.8" fill="url(#rg)" stroke="#4a4a55" stroke-width="1.1"/><path d="M20.4 245.5 v-3.2 l-3.2 3.2z" fill="#111"/><circle cx="11.5" cy="258" r="4.3" fill="url(#rg)" stroke="#70707c" stroke-width="1.1"/><path d="M20 265.3 v-3.2 l-3.2 3.2z" fill="#111"/><path d="M9.2 273.9 H13.8 L16.1 278 L13.8 282.1 H9.2 L6.9 278Z" fill="url(#rg)" stroke="#70707c" stroke-width="1.1"/><path d="M20 285.6 v-3.2 l-3.2 3.2z" fill="#111"/><circle cx="11.8" cy="295.3" r="3.2" fill="#f2f2f6" stroke="#80808c" stroke-width="1"/><rect x="6.4" y="297" width="5.6" height="5" fill="#f6f6fa" stroke="#80808c" stroke-width="1"/><rect x="10.6" y="298.6" width="6" height="5.4" fill="#ececf2" stroke="#70707c" stroke-width="1"/><path d="M20 306 v-3.2 l-3.2 3.2z" fill="#111"/><rect x="6.4" y="335.2" width="10.6" height="9.6" fill="#f0f0f6" stroke="#666878" stroke-width="1.1"/><path d="M10 335.2v9.6M13.5 335.2v9.6M6.4 338.4h10.6M6.4 341.6h10.6" stroke="#8a8c9c" stroke-width="0.7"/><rect x="6.3" y="354" width="3.6" height="3.4" fill="#d4dcf4" stroke="#5566a8" stroke-width="0.8"/><rect x="8.8" y="356.4" width="4.6" height="4.6" fill="#e8c89a" stroke="#a08050" stroke-width="0.8"/><rect x="11.8" y="359.6" width="5.6" height="5.4" fill="#f07410" stroke="#b85408" stroke-width="0.8"/><path d="M20 367 v-3.2 l-3.2 3.2z" fill="#111"/><path d="M6.8 384.6 L8 381.6 L13.2 376.4 L15.2 378.4 L10 383.6Z" fill="#8a8e98" stroke="#444" stroke-width="0.7"/><path d="M12.4 376 L15 373.4 Q17.4 372.6 18 375 L15.6 378 Z" fill="#26262e"/><path d="M11.8 375.4l4.4 4.4" stroke="#26262e" stroke-width="1.6"/><path d="M19.4 387 v-3.2 l-3.2 3.2z" fill="#111"/><path d="M11.3 394.2 L14.2 399.6 L13.2 403.4 H9.4 L8.4 399.6Z" fill="#f6f6f8" stroke="#4a4a52" stroke-width="1"/><path d="M11.3 397v3.6" stroke="#666" stroke-width="0.8"/><rect x="7.8" y="404" width="7" height="1.7" fill="#222"/><path d="M19.4 407.2 v-3.2 l-3.2 3.2z" fill="#111"/><path d="M11 415.4 L16.6 421 L11 426.6 L5.4 421Z" fill="#f6f2ea" stroke="#5a5a60" stroke-width="1"/><path d="M6.3 421.4 H15.8 L11 426.2Z" fill="#d07a1c"/><path d="M9 415.8 q2-2.4 3.4 0.6" fill="none" stroke="#666" stroke-width="0.8"/><path d="M20 427.4 v-3.2 l-3.2 3.2z" fill="#111"/><path d="M9.6 435.6 L12.6 438.6 L9.6 441.6 L6.6 438.6Z" fill="#9a9aa0" stroke="#666" stroke-width="0.7"/><path d="M10 441 L13.6 437.6 L17.4 443 L13 446.6Z" fill="#f0d48a" stroke="#b89848" stroke-width="0.6"/><path d="M19.4 447.4 v-3.2 l-3.2 3.2z" fill="#111"/></svg>
<div class="abs tx " style="left:6.3px;top:312.5px;font-size:10.8px;color:#555;text-shadow:0 0 0.5px #555">字</div>
<svg class="abs" style="left:0;top:0" width="1000" height="723" viewBox="0 0 1000 723"><line x1="820.4" y1="106" x2="820.4" y2="723" stroke="#cdcdcd" stroke-width="1"/><rect x="821" y="91" width="132" height="15" fill="#b9dcf8"/><path d="M941 96l2.6 2.6-2.6 2.6M944.6 96l2.6 2.6-2.6 2.6" fill="none" stroke="#4a6d8a" stroke-width="1.3"/><rect x="953.8" y="91.8" width="12.2" height="12.6" rx="1.5" fill="#c9dbef" stroke="#7ba6c9" stroke-width="1"/><rect x="956.2" y="98" width="7.4" height="2.6" fill="#fff" stroke="#6f95c4" stroke-width="0.8"/><rect x="969.3" y="91.8" width="12.4" height="12.6" rx="1.5" fill="#cb6a5e" stroke="#a44a40" stroke-width="1"/><path d="M972.6 95.2l5.8 5.8M978.4 95.2l-5.8 5.8" stroke="#fff" stroke-width="1.7"/><line x1="965.5" y1="106" x2="965.5" y2="723" stroke="#b8b8b8" stroke-width="1"/><path d="M965.5 108.5 H979 Q981.5 108.5 981.5 111 V145 Q981.5 147.5 979 147.5 H965.5" fill="#f3f3f3" stroke="#cfcfcf" stroke-width="1"/><rect x="967.6" y="113" width="10.4" height="10.6" fill="#6a6cba"/><path d="M964.5 147.5 H980 Q982.8 147.5 982.8 150 V234.5 Q982.8 237.3 980 237.3 H964.5Z" fill="#fdfdfd" stroke="#d4d4d4" stroke-width="0.8"/><rect x="964" y="148.2" width="2.4" height="88.6" fill="#fdfdfd"/><rect x="971" y="152.3" width="9" height="10.6" rx="1" fill="#8a2a1c"/><rect x="973" y="153.6" width="5" height="8" fill="#ffd800"/><path d="M971.6 152.8v9.6M979.4 152.8v9.6" stroke="#40304a" stroke-width="1.1" stroke-dasharray="1.2 1"/><path d="M971.4 226.2l5.4 5.6M976.8 226.2l-5.4 5.6" stroke="#777" stroke-width="0.9"/><path d="M965.5 239.5 H979.5 Q981.5 239.5 981.5 241.5 V250" fill="none" stroke="#e2e2e2" stroke-width="1"/><text transform="translate(969.3 128) rotate(90)" font-size="8.6" fill="#8c8c8c" font-family="Liberation Sans, Noto Sans CJK SC, sans-serif">颜色</text><text transform="translate(970.6 166) rotate(90)" font-size="8.6" fill="#222" stroke="#222" stroke-width="0.25" font-family="Liberation Sans, Noto Sans CJK SC, sans-serif">位图颜色遮罩</text><rect x="984" y="91" width="16" height="632" fill="#f6f6f6"/><line x1="986.5" y1="94.3" x2="998" y2="94.3" stroke="#c8c8c8" stroke-width="1.2" stroke-dasharray="1.2 1.6"/><circle cx="992.2" cy="104" r="4.6" fill="#fbfbfb" stroke="#d4d4d4" stroke-width="1"/><path d="M990.8 101.6 L994.4 104 L990.8 106.4Z" fill="#111"/><path d="M989 120.4 L992.1 117.4 L995.2 120.4" fill="none" stroke="#8a8a8a" stroke-width="1.1"/><rect x="986.8" y="126.6" width="10.6" height="10" fill="#fff" stroke="#333" stroke-width="1.1"/><path d="M986.8 126.6l10.6 10M997.4 126.6l-10.6 10" stroke="#333" stroke-width="0.9"/><rect x="984.8" y="137.8" width="15.2" height="557.2" fill="#8e8e8e"/><rect x="985.4" y="138.20" width="13.4" height="12.74" fill="#232320"/><rect x="985.4" y="151.44" width="13.4" height="12.74" fill="#363634"/><rect x="985.4" y="164.68" width="13.4" height="12.74" fill="#4a4a48"/><rect x="985.4" y="177.92" width="13.4" height="12.74" fill="#5c5c5a"/><rect x="985.4" y="191.16" width="13.4" height="12.74" fill="#6e6e6c"/><rect x="985.4" y="204.40" width="13.4" height="12.74" fill="#828280"/><rect x="985.4" y="217.64" width="13.4" height="12.74" fill="#969694"/><rect x="985.4" y="230.88" width="13.4" height="12.74" fill="#a8a8a6"/><rect x="985.4" y="244.12" width="13.4" height="12.74" fill="#bdbdbb"/><rect x="985.4" y="257.36" width="13.4" height="12.74" fill="#dddddd"/><rect x="985.4" y="270.60" width="13.4" height="12.74" fill="#ffffff"/><rect x="985.4" y="283.84" width="13.4" height="12.74" fill="#2e1a80"/><rect x="985.4" y="297.08" width="13.4" height="12.74" fill="#0d86e0"/><rect x="985.4" y="310.32" width="13.4" height="12.74" fill="#0a9048"/><rect x="985.4" y="323.56" width="13.4" height="12.74" fill="#fff000"/><rect x="985.4" y="336.80" width="13.4" height="12.74" fill="#f04008"/><rect x="985.4" y="350.04" width="13.4" height="12.74" fill="#f02878"/><rect x="985.4" y="363.28" width="13.4" height="12.74" fill="#a84878"/><rect x="985.4" y="376.52" width="13.4" height="12.74" fill="#f88808"/><rect x="985.4" y="389.76" width="13.4" height="12.74" fill="#f8a0a0"/><rect x="985.4" y="403.00" width="13.4" height="12.74" fill="#706860"/><rect x="985.4" y="416.24" width="13.4" height="12.74" fill="#b8a8d8"/><rect x="985.4" y="429.48" width="13.4" height="12.74" fill="#8878b8"/><rect x="985.4" y="442.72" width="13.4" height="12.74" fill="#5a72b8"/><rect x="985.4" y="455.96" width="13.4" height="12.74" fill="#6a52a0"/><rect x="985.4" y="469.20" width="13.4" height="12.74" fill="#8070a0"/><rect x="985.4" y="482.44" width="13.4" height="12.74" fill="#455888"/><rect x="985.4" y="495.68" width="13.4" height="12.74" fill="#4a4860"/><rect x="985.4" y="508.92" width="13.4" height="12.74" fill="#687890"/><rect x="985.4" y="522.16" width="13.4" height="12.74" fill="#0a7cd8"/><rect x="985.4" y="535.40" width="13.4" height="12.74" fill="#5cc0fa"/><rect x="985.4" y="548.64" width="13.4" height="12.74" fill="#9ab0c4"/><rect x="985.4" y="561.88" width="13.4" height="12.74" fill="#808c98"/><rect x="985.4" y="575.12" width="13.4" height="12.74" fill="#686e78"/><rect x="985.4" y="588.36" width="13.4" height="12.74" fill="#3e4448"/><rect x="985.4" y="601.60" width="13.4" height="12.74" fill="#3c6460"/><rect x="985.4" y="614.84" width="13.4" height="12.74" fill="#1f7a6c"/><rect x="985.4" y="628.08" width="13.4" height="12.74" fill="#508088"/><rect x="985.4" y="641.32" width="13.4" height="12.74" fill="#0f9490"/><rect x="985.4" y="654.56" width="13.4" height="12.74" fill="#189870"/><rect x="985.4" y="667.80" width="13.4" height="12.74" fill="#0ea8cc"/><rect x="985.4" y="681.04" width="13.4" height="12.74" fill="#2890aa"/><path d="M989.2 700.4 L992.1 703.3 L995 700.4" fill="none" stroke="#8a8a8a" stroke-width="1.1"/><path d="M988.6 709.6v9" stroke="#111" stroke-width="1.5"/><path d="M995 709.6v9l-5-4.5z" fill="#111"/><circle cx="839.7" cy="116.4" r="4.4" fill="#fff" stroke="#666" stroke-width="0.9"/><circle cx="839.7" cy="116.4" r="2.1" fill="#222"/><circle cx="839.7" cy="132" r="4.4" fill="#fff" stroke="#777" stroke-width="0.9"/><rect x="835" y="140.8" width="103.4" height="61.4" fill="#fff" stroke="#ababab" stroke-width="1"/><clipPath id="lbc"><rect x="835.5" y="141.3" width="102.4" height="60.4"/></clipPath><g clip-path="url(#lbc)"><rect x="838.3" y="144.2" width="8.6" height="8.6" fill="#fff" stroke="#b4b4b4" stroke-width="1"/><rect x="850" y="144.0" width="51.6" height="9" fill="#1a1a1a"/><rect x="838.3" y="156.7" width="8.6" height="8.6" fill="#fff" stroke="#b4b4b4" stroke-width="1"/><rect x="850" y="156.5" width="51.6" height="9" fill="#1a1a1a"/><text x="910.6" y="164.7" font-size="9.4" fill="#222" font-family="Liberation Sans, sans-serif">0</text><rect x="838.3" y="169.2" width="8.6" height="8.6" fill="#fff" stroke="#b4b4b4" stroke-width="1"/><rect x="850" y="169.0" width="51.6" height="9" fill="#1a1a1a"/><text x="910.6" y="177.2" font-size="9.4" fill="#222" font-family="Liberation Sans, sans-serif">0</text><rect x="838.3" y="181.7" width="8.6" height="8.6" fill="#fff" stroke="#b4b4b4" stroke-width="1"/><rect x="850" y="181.5" width="51.6" height="9" fill="#1a1a1a"/><text x="910.6" y="189.7" font-size="9.4" fill="#222" font-family="Liberation Sans, sans-serif">0</text><rect x="838.3" y="194.2" width="8.6" height="8.6" fill="#fff" stroke="#b4b4b4" stroke-width="1"/><rect x="850" y="194.0" width="51.6" height="9" fill="#1a1a1a"/><text x="910.6" y="202.2" font-size="9.4" fill="#222" font-family="Liberation Sans, sans-serif">0</text><rect x="848.6" y="142.2" width="54.4" height="11.6" fill="none" stroke="#3d9bf4" stroke-width="1.2"/><rect x="904" y="142" width="19.6" height="12" fill="#3a96f3"/><text x="910.6" y="152" font-size="9.4" fill="#fff" font-family="Liberation Sans, sans-serif">0</text><line x1="903.4" y1="141" x2="903.4" y2="202" stroke="#1a2a4a" stroke-width="0.9"/><rect x="923.8" y="141.4" width="14" height="60.4" fill="#f2f2f2"/><rect x="924.6" y="155.6" width="11" height="13" fill="#d2d2d2" stroke="#c0c0c0" stroke-width="0.6"/><path d="M927.4 150.6l2.9-2.9 2.9 2.9M927.4 193.4l2.9 2.9 2.9-2.9" fill="none" stroke="#7a7a7a" stroke-width="1.1"/></g><rect x="836.3" y="258.8" width="16.8" height="16.8" fill="#d3e1f1" stroke="#8fb0d0" stroke-width="1"/><rect x="858.7" y="258.8" width="16.8" height="16.8" fill="#d3e1f1" stroke="#8fb0d0" stroke-width="1"/><rect x="898.3" y="258.8" width="16.8" height="16.8" fill="#d3e1f1" stroke="#8fb0d0" stroke-width="1"/><rect x="920.6" y="258.8" width="16.8" height="16.8" fill="#d3e1f1" stroke="#8fb0d0" stroke-width="1"/><path d="M839.4 272.6 L840.4 270 L845.4 265 L847.2 266.8 L842.2 271.8Z" fill="#70747e" stroke="#333" stroke-width="0.6"/><path d="M844.6 264.6 L847 262.2 Q849.4 261.4 850 263.8 L847.6 266.8Z" fill="#1c1c24"/><path d="M844 264l4.2 4.2" stroke="#1c1c24" stroke-width="1.5"/><rect x="861.6" y="261.8" width="11" height="11" fill="#f4f4f4" stroke="#222" stroke-width="1.2" stroke-dasharray="3 1.2"/><rect x="866" y="263" width="4" height="4" fill="#e02020"/><rect x="869" y="264.8" width="3.6" height="3.6" fill="#f4d800"/><rect x="866.4" y="267.4" width="4" height="4" fill="#2850c8"/><rect x="863" y="264" width="3" height="6" fill="#fff"/><rect x="902" y="262.6" width="9.4" height="9.4" fill="#22285e"/><rect x="904" y="262.6" width="5.2" height="3.6" fill="#e8e8f4"/><rect x="904.4" y="268.4" width="4.6" height="3.6" fill="#9fa4c8"/><rect x="905" y="269" width="1.4" height="2.6" fill="#22285e"/><path d="M924 272 V262.8 H928.4 L929.4 264.2 H933 V265.8" fill="#1c2250" stroke="#1c2250" stroke-width="0.8"/><path d="M924.3 272 L926.4 266.2 H935 L932.6 272Z" fill="#d9dcec" stroke="#1c2250" stroke-width="1"/><path d="M849 301.4h42" stroke="#dcdcdc" stroke-width="1.6"/><path d="M841.4 296.4 h6.4 v6.2 l-3.2 3.4 l-3.2 -3.4z" fill="#ececec" stroke="#a0a0a0" stroke-width="0.9"/><path d="M844.6 310v1.6M855.6 310v1.6M866.6 310v1.6M877.6 310v1.6M888.6 310v1.6" stroke="#cfcfcf" stroke-width="1"/><rect x="900.6" y="294.8" width="28.2" height="14.6" fill="#fff" stroke="#8a8a8a" stroke-width="1"/><path d="M901.6 308.6V295.8H928" fill="none" stroke="#555" stroke-width="0.8"/><text x="904.6" y="305.6" font-size="9.4" fill="#222" font-family="Liberation Sans, sans-serif">0</text><text x="931" y="305" font-size="8.6" fill="#222" font-family="Liberation Sans, sans-serif">%</text><rect x="836.3" y="319.8" width="77.6" height="16" fill="#f2f2f2" stroke="#a8a8a8" stroke-width="1"/><rect x="837.3" y="320.8" width="75.6" height="14" fill="none" stroke="#fbfbfb" stroke-width="1"/><rect x="919.8" y="319.8" width="16.6" height="16" fill="#f2f2f2" stroke="#a8a8a8" stroke-width="1"/><path d="M924.6 325.4h7.2M926.8 325v-1.4h2.8V325M925.4 326.4l.5 6.6h4.6l.5-6.6M927.3 327.4v4.6M929.1 327.4v4.6" fill="none" stroke="#c9c9c9" stroke-width="0.9"/></svg>
<div class="abs tx " style="left:826.6px;top:92.4px;font-size:9.4px;color:#0d2c4f;text-shadow:0 0 0.5px #0d2c4f">位图颜色遮罩</div>
<div class="abs tx " style="left:847px;top:110.4px;font-size:9.4px;color:#111">隐藏颜色</div>
<div class="abs tx " style="left:847px;top:126px;font-size:9.4px;color:#111">显示颜色</div>
<div class="abs tx " style="left:835px;top:281.6px;font-size:9.4px;color:#111;text-shadow:0 0 0.5px #111">容限:</div>
<div class="abs tx " style="left:866px;top:322px;font-size:9.4px;color:#9a9a9a">应用</div>
<div class="abs" style="left:23.7px;top:228.7px;width:111.5px;height:48.5px;background:#9c9c9c"></div>
<div class="abs" style="left:22px;top:227px;width:111.5px;height:48.5px;background:#f4f4f4;border:1px solid #b4b4b4"></div>
<div class="abs" style="left:23.8px;top:238px;width:108.6px;height:17.4px;background:#c6ddf6;border:1px solid #92bfe9"></div>
<svg class="abs" style="left:0;top:0" width="140" height="280" viewBox="0 0 140 280"><line x1="27" y1="232.2" x2="130" y2="232.2" stroke="#c4c4c4" stroke-width="1.5" stroke-dasharray="1.2 1.6"/><defs><linearGradient id="rg2" x1="0" y1="0" x2="0" y2="1"><stop offset="0" stop-color="#ffffff"/><stop offset="1" stop-color="#c9c9cf"/></linearGradient></defs><rect x="27.3" y="243.2" width="9.2" height="8.8" fill="url(#rg2)" stroke="#5a5a66" stroke-width="1.1"/><rect x="27.6" y="259.6" width="9.4" height="9" fill="url(#rg2)" stroke="#777782" stroke-width="0.9"/><g fill="#444"><rect x="26.4" y="258.4" width="2.2" height="2.2"/><rect x="36" y="258.4" width="2.2" height="2.2"/><rect x="26.4" y="267.6" width="2.2" height="2.2"/><rect x="36" y="267.6" width="2.2" height="2.2"/></g></svg>
<div class="abs tx " style="left:50px;top:241.2px;font-size:9.4px;color:#111">矩形(<u>R</u>)</div>
<div class="abs tx " style="left:107px;top:241.2px;font-size:9.4px;color:#111">F6</div>
<div class="abs tx " style="left:50px;top:258.6px;font-size:9.4px;color:#111">3 点矩形(<u>3</u>)</div>
<svg class="abs" style="left:0;top:0" width="1000" height="723" viewBox="0 0 1000 723"><polygon points="109.4,250.3 119.5,265.7 115.7,266.5 122.8,346.5 107.9,266.8 102.9,267.6" fill="#f83238"/><polygon points="318.0,452.7 299.6,450.6 302.2,455.4 181.5,508.2 304.2,460.6 306.0,464.6" fill="#f83238"/><polygon points="473.2,447.1 489.7,440.2 489.7,444.2 662.6,464.0 489.7,453.0 489.3,456.4" fill="#f83238"/><polygon points="990.1,303.0 971.2,303.4 975.2,307.0 830.2,388.8 977.6,311.8 979.4,317.2" fill="#f83238"/></svg>
</div></body></html>
